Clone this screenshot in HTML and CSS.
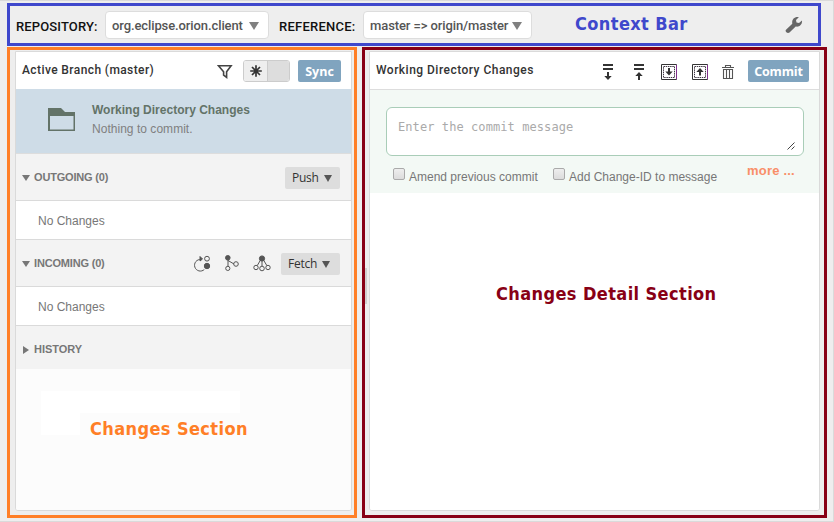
FILE: index.html
```
<!DOCTYPE html>
<html lang="en">
<head>
<meta charset="utf-8">
<title>Git</title>
<link rel="stylesheet" href="styles.css">
</head>
<body>
<div class="page">
  <header class="context">
    <span class="ctx-label repo">REPOSITORY:</span>
    <div class="dropdown d-repo"><span>org.eclipse.orion.client</span><i class="tri"></i></div>
    <span class="ctx-label ref">REFERENCE:</span>
    <div class="dropdown d-ref"><span>master =&gt; origin/master</span><i class="tri"></i></div>
    <span class="note note-blue">Context Bar</span>
    <svg class="wrench" width="18" height="18" viewBox="0 0 18 18"><path d="M1 13.800 7.300 7.800C6.600 4 9 .5 13.800 1.200L11 4l.5 2.500 2.500.5 3-2.500c.5 4-2.500 6.800-6.300 6L4.500 16.600c-2 1.400-5-1-3.500-2.800z" fill="#666"/></svg>
  </header>
  <main class="columns">
    <section class="frame frame-left">
      <div class="panel panel-left">
        <div class="head">
          <span class="title t-branch">Active Branch (master)</span>
          <svg class="filter" width="16" height="16" viewBox="0 0 16 16"><path d="M1.500 1.800h12.600L9.600 7.800v5.600L6.600 11.200V7.800z" fill="none" stroke="#444" stroke-width="1.600"/></svg>
          <div class="toggle"><span class="on"><svg width="14" height="14" viewBox="0 0 14 14"><path d="M7 1.200v11.600M1.200 7h11.600M3 3l8 8M11 3l-8 8" stroke="#333" stroke-width="1.700"/></svg></span><span class="off"></span></div>
          <button class="primary sync">Sync</button>
        </div>
        <div class="selected">
          <svg width="28" height="24" viewBox="0 0 28 24"><path d="M0 0h13l4 4h10v19H0zM2 8v13.500h23.500V8z" fill="#637368" fill-rule="evenodd"/></svg>
          <div><div class="s-title">Working Directory Changes</div><div class="s-sub">Nothing to commit.</div></div>
        </div>
        <div class="group"><i class="tri dark"></i><span class="g-label g-out">OUTGOING (0)</span><button class="soft push">Push<i class="tri dark2"></i></button></div>
        <div class="empty">No Changes</div>
        <div class="group"><i class="tri dark"></i><span class="g-label g-in">INCOMING (0)</span>
          <div class="git-icons">
            <svg width="17" height="17" viewBox="0 0 17 17" fill="none" stroke="#555"><path d="M7 4.500A5.800 5.800 0 1 0 10.300 14.500"/><path d="M6 1.500l2.500 2.500L6 6z" fill="#555"/><circle cx="13" cy="3.700" r="2.400"/><circle cx="13" cy="11" r="2.700" fill="#555"/></svg>
            <svg width="16" height="17" viewBox="0 0 16 17" fill="none" stroke="#555"><path d="M4 3v9M4 5.500l6 3.500"/><circle cx="3.800" cy="2.800" r="2.300" fill="#555"/><circle cx="3.800" cy="13.400" r="2.100"/><circle cx="12" cy="9" r="2.300"/></svg>
            <svg width="18" height="17" viewBox="0 0 18 17" fill="none" stroke="#555"><path d="M9 4v7M7.500 5 4.300 10.500M10.500 5l3.300 5.500"/><circle cx="9" cy="3.500" r="2.600" fill="#555"/><circle cx="3" cy="12.500" r="2.200"/><circle cx="9" cy="13.500" r="2.300"/><circle cx="15" cy="12.500" r="2.200"/></svg>
          </div>
          <button class="soft fetch">Fetch<i class="tri dark2"></i></button></div>
        <div class="empty">No Changes</div>
        <div class="group last"><i class="tri-right"></i><span class="g-label g-his">HISTORY</span></div>
        <div class="blank"><div class="patch patch-wide"></div><div class="patch patch-small"></div><span class="note note-orange">Changes Section</span></div>
      </div>
    </section>
    <section class="frame frame-right">
      <i class="splitter"></i>
      <div class="panel panel-right">
        <div class="head">
          <span class="title t-work">Working Directory Changes</span>
          <div class="tools">
            <svg width="16" height="18" viewBox="0 0 16 18"><path d="M3 1h10v2H3zM3 5h10v2H3zM7 9h2v4h2.700L8 17l-3.700-4H7z" fill="#333"/></svg>
            <svg width="16" height="18" viewBox="0 0 16 18"><path d="M3 1h10v2H3zM3 5h10v2H3zM8 9l3.700 4H9v4H7v-4H4.300z" fill="#333"/></svg>
            <svg width="16" height="16" viewBox="0 0 16 16"><path d="M.5.5h15v15H.5z" fill="none" stroke="#333"/><path d="M2.500 2.500h11v11h-11z" fill="none" stroke="#403845" stroke-dasharray="1.500 .7"/><path d="M7 4h2v3.500h2.700L8 11.500 4.300 7.500H7z" fill="#333"/><path d="M15.500 1v14" stroke="#80308c"/></svg>
            <svg width="16" height="16" viewBox="0 0 16 16"><path d="M.5.5h15v15H.5z" fill="none" stroke="#333"/><path d="M2.500 2.500h11v11h-11z" fill="none" stroke="#403845" stroke-dasharray="1.500 .7"/><path d="M8 4l3.700 4H9v3.500H7V8H4.300z" fill="#333"/><path d="M15.500 1v14" stroke="#80308c"/></svg>
            <svg width="12" height="14" viewBox="0 0 12 14"><path d="M0 2.500h12M3.500 2V.500h5V2M1.500 4.500h9v9h-9zM4.500 5v8.500M7.500 5v8.500" fill="none" stroke="#555" stroke-width="1.100"/></svg>
          </div>
          <button class="primary commit">Commit</button>
        </div>
        <div class="form">
          <div class="message"><span>Enter the commit message</span><svg width="8" height="8" viewBox="0 0 8 8"><path d="M.500 7.500l7-7M4.500 7.500l3-3" stroke="#444" fill="none"/></svg></div>
          <div class="options">
            <i class="check"></i><span class="o-text o-amend">Amend previous commit</span>
            <i class="check"></i><span class="o-text o-id">Add Change-ID to message</span>
            <span class="more">more ...</span>
          </div>
        </div>
        <div class="detail"><span class="note note-red">Changes Detail Section</span></div>
      </div>
    </section>
  </main>
</div>
</body>
</html>
```
FILE: styles.css
```
* { box-sizing: border-box; }
body { margin: 0; font-family: "Liberation Sans", Arial, sans-serif; font-size: 12px; }
svg { display: block; flex: none; }
span { white-space: nowrap; }
button { border: 0; margin: 0; padding: 0; }
.page { width: 834px; height: 522px; background: #eee; border: 1px solid #dadada; border-left: 0; padding: 2px 6px 3px 7px; }
.context { width: 814px; height: 43px; border: 3px solid #3f48cc; display: flex; align-items: center; padding: 1px 0 0 6px; }
.ctx-label { font-family: Roboto, sans-serif; font-weight: 500; font-size: 13px; color: #111; padding-top: 3px; }
.repo { width: 89px; letter-spacing: .14px; }
.ref { width: 84px; margin-left: 10px; letter-spacing: .25px; }
.dropdown { height: 28px; border: 1px solid #ddd; border-radius: 4px; background: #fff; display: flex; align-items: center; justify-content: space-between; padding: 0 9px 0 6px; color: #555; font: 500 13px Roboto, sans-serif; letter-spacing: -.1px; }
.d-repo { width: 164px; }
.d-ref { width: 169px; }
.tri { border: 5px solid transparent; border-top: 8px solid #808080; border-bottom: 0; width: 0; height: 0; margin-top: 2px; flex: none; }
.note { font-family: "DejaVu Sans Condensed", "DejaVu Sans", sans-serif; font-stretch: condensed; font-weight: bold; font-size: 18px; line-height: 22px; letter-spacing: .4px; }
.note-blue { color: #3f48cc; margin: -3px 0 0 43px; width: 120px; }
.wrench { margin: -1px 0 0 90px; }
.columns { display: flex; gap: 5px; margin-top: 1px; }
.frame { height: 471px; border: 3px solid; padding: 1px 2px 4px 5px; }
.frame-left { width: 350px; border-color: #ff7f27; }
.frame-right { width: 465px; border-color: #880015; padding: 1px 4px 4px; position: relative; }
.splitter { position: absolute; left: 0; top: 218px; width: 2px; height: 36px; background: #d0d0d0; }
.panel { height: 460px; border: 1px solid #dadada; border-radius: 0 0 3px 3px; background: #fff; display: flex; flex-direction: column; overflow: hidden; }
.head { height: 38px; flex: none; display: flex; align-items: center; padding: 0 10px 0 6px; border-bottom: 1px solid #ddd; }
.panel-left .head { border-bottom: 0; height: 37px; }
.title { font: 500 12px Roboto, sans-serif; color: #333; margin-top: -1px; }
.t-branch { width: 195px; letter-spacing: .4px; }
.t-work { width: 225px; letter-spacing: .48px; }
.filter { margin-top: 3px; }
.toggle { width: 47px; height: 22px; margin: 1px 0 0 10px; border: 1px solid #ccc; border-radius: 3px; display: flex; overflow: hidden; }
.on { width: 24px; background: #eee; border-right: 1px solid #ccc; display: grid; place-items: center; }
.off { flex: 1; background: #ddd; }
.primary { height: 22px; background: #80a4bf; color: #fff; border-radius: 2px; font: bold 12.500px "Open Sans", sans-serif; margin-top: 1px; flex: none; }
.sync { width: 43px; margin-left: 8px; }
.commit { width: 61px; margin-left: 13px; letter-spacing: -.15px; }
.selected { height: 65px; flex: none; background: #cedce7; border-bottom: 1px solid #ddd; display: flex; padding: 19px 0 0 32px; gap: 16px; }
.selected > div { margin-top: -7px; font-size: 12px; line-height: 19px; }
.s-title { font-weight: bold; color: #637368; }
.s-sub { color: #808080; letter-spacing: .03px; }
.group { height: 47px; flex: none; border-bottom: 1px solid #dadada; background: #f3f3f3; display: flex; align-items: center; padding: 0 11px 0 6px; }
.group .dark { border-width: 6px 4px 0; border-top-color: #777; }
.soft .dark2 { border-width: 7px 4px 0; border-top-color: #555; }
.g-label { font-weight: bold; font-size: 11px; color: #777; margin-left: 4px; }
.g-out { letter-spacing: -.18px; }
.g-in { letter-spacing: -.18px; }
.soft { height: 22px; background: #ddd; color: #333; border-radius: 2px; font: 12px "Open Sans", sans-serif; letter-spacing: -.25px; display: flex; align-items: center; justify-content: flex-start; padding-left: 7px; gap: 5px; margin-top: 1px; }
.soft .tri { margin-top: 1px; }
.push { width: 55px; margin-left: auto; }
.fetch { width: 59px; margin-left: 10px; }
.git-icons { margin: 1px 0 0 auto; display: flex; gap: 13px; }
.empty { height: 39px; flex: none; border-bottom: 1px solid #dadada; padding: 0 22px; line-height: 40px; font-size: 12px; color: #777; }
.last { height: 43px; border-bottom: 0; padding-top: 4px; }
.tri-right { border: 4px solid transparent; border-left: 6px solid #777; border-right: 0; margin-left: 1px; }
.g-his { margin-left: 5px; margin-top: -1px; letter-spacing: -.05px; }
.blank { flex: 1; background: #fcfcfc; position: relative; }
.patch { position: absolute; background: #fff; left: 25px; }
.patch-wide { top: 22px; width: 199px; height: 22px; }
.patch-small { top: 44px; width: 39px; height: 22px; }
.note-orange { position: absolute; left: 74px; top: 49px; color: #ff7f27; }
.tools { display: flex; align-items: center; width: 134px; justify-content: space-between; margin: 2px 0 0 -1px; }
.tools + .commit { margin-left: auto; }
.form { height: 103px; flex: none; background: #f3f9f5; padding: 17px 15px 0 16px; }
.message { height: 49px; border: 1px solid #a9cdb8; border-radius: 6px; background: #fff; color: #aaa; font: 12px "DejaVu Sans Mono", monospace; letter-spacing: .08px; padding: 12px 8px 5px 11px; display: flex; justify-content: space-between; }
.message svg { align-self: flex-end; }
.options { display: flex; padding-left: 7px; align-items: flex-start; }
.check { width: 12px; height: 12px; margin-top: 12px; border: 1px solid #aaa; border-radius: 2px; background: linear-gradient(#eee, #dcdcdc); flex: none; }
.o-text { color: #777; font-size: 12px; line-height: 14px; margin: 14px 0 0 4px; }
.o-amend { width: 144px; }
.o-id { width: 178px; }
.more { color: #f98f68; font-weight: bold; font-size: 13px; line-height: 15px; margin-top: 7px; letter-spacing: .2px; }
.detail { flex: 1; background: #fff; padding: 90px 0 0 126px; }
.note-red { color: #880015; }
```
